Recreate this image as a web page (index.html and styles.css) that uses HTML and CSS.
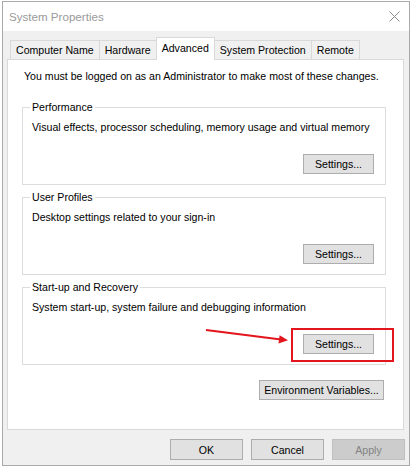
FILE: index.html
```html
<!DOCTYPE html>
<html>
<head>
<meta charset="utf-8">
<link rel="stylesheet" href="styles.css">
</head>
<body>
<div class="window">
  <div class="titlebar">
    <span class="title">System Properties</span>
    <svg class="close" width="11" height="11" viewBox="0 0 11 11"><path d="M0.5 0.5 L10.5 10.5 M10.5 0.5 L0.5 10.5" stroke="#8a8a8a" stroke-width="1" fill="none"/></svg>
  </div>
  <div class="body">
    <div class="tabs">
      <div class="tab">Computer Name</div>
      <div class="tab">Hardware</div>
      <div class="tab active">Advanced</div>
      <div class="tab">System Protection</div>
      <div class="tab">Remote</div>
    </div>
    <div class="panel">
      <p class="note">You must be logged on as an Administrator to make most of these changes.</p>
      <fieldset class="group first">
        <legend>Performance</legend>
        <p class="desc">Visual effects, processor scheduling, memory usage and virtual memory</p>
        <div class="actions"><button class="btn">Settings...</button></div>
      </fieldset>
      <fieldset class="group">
        <legend>User Profiles</legend>
        <p class="desc">Desktop settings related to your sign-in</p>
        <div class="actions"><button class="btn">Settings...</button></div>
      </fieldset>
      <fieldset class="group">
        <legend>Start-up and Recovery</legend>
        <p class="desc">System start-up, system failure and debugging information</p>
        <div class="actions">
          <div class="highlight">
            <svg class="arrow" width="92" height="20" viewBox="0 0 92 20"><line x1="3" y1="4" x2="78" y2="13.4" stroke="#e3141b" stroke-width="2"/><polygon points="85,14.3 76.6,9.2 75.5,17.6" fill="#e3141b"/></svg>
            <button class="btn">Settings...</button>
          </div>
        </div>
      </fieldset>
      <div class="env-row"><button class="btn wide">Environment Variables...</button></div>
    </div>
    <div class="footer">
      <button class="btn big">OK</button>
      <button class="btn big">Cancel</button>
      <button class="btn big disabled">Apply</button>
    </div>
  </div>
</div>
</body>
</html>
```
FILE: styles.css
```css
* { box-sizing: border-box; }
html, body { margin: 0; padding: 0; }
body {
  background: #ffffff;
  font-family: "Liberation Sans", Arial, sans-serif;
  font-size: 10.6px;
  color: #000;
}
.window {
  margin: 1px 0 0 2px;
  width: 408px;
  height: 465px;
  border: 1px solid #a9a9a9;
  background: #f0f0f0;
  display: flex;
  flex-direction: column;
}
.titlebar {
  height: 29px;
  background: #fff;
  display: flex;
  align-items: center;
  justify-content: space-between;
  padding: 0 9px 0 6px;
  flex: 0 0 auto;
}
.title {
  font-size: 11.6px;
  color: #9a9a9a;
}
.body {
  padding: 6px 5px 0 4px;
  display: flex;
  flex-direction: column;
}
.tabs {
  display: flex;
  align-items: flex-end;
  margin-left: 3px;
  height: 22px;
}
.tab {
  height: 19px;
  line-height: 18px;
  padding: 0 5px;
  border: 1px solid #d9d9d9;
  border-bottom: none;
  background: #f0f0f0;
  margin-left: -1px;
  white-space: nowrap;
}
.tab:first-child { margin-left: 0; }
.tab.active {
  height: 23px;
  line-height: 20px;
  background: #fff;
  position: relative;
  z-index: 1;
  margin-bottom: -1px;
}
.panel {
  height: 371px;
  background: #fff;
  border: 1px solid #d9d9d9;
  padding: 9px 17px 0 14px;
}
.note {
  margin: 0 0 0 2px;
  line-height: 15px;
}
.group {
  margin: 5px 0 0 0;
  padding: 5px 11px 10px 9px;
  border: 1px solid #dcdcdc;
  min-width: 0;
}
.group.first { margin-top: 16px; }
.group legend {
  padding: 0 2px;
  margin-left: -2px;
  line-height: 15px;
}
.desc {
  margin: 0;
  line-height: 15px;
}
.actions {
  display: flex;
  justify-content: flex-end;
  margin-top: 19px;
}
.btn {
  font-family: inherit;
  font-size: inherit;
  color: #000;
  width: 71px;
  height: 20px;
  padding: 0;
  border: 1px solid #adadad;
  background: #e1e1e1;
}
.highlight {
  position: relative;
  display: flex;
}
.highlight::before {
  content: "";
  position: absolute;
  left: -12px;
  top: -6px;
  width: 99px;
  height: 30px;
  border: 2px solid #e3141b;
}
.arrow {
  position: absolute;
  left: -100px;
  top: -8px;
}
.env-row {
  display: flex;
  justify-content: flex-end;
  padding-right: 2px;
  margin-top: 15px;
}
.btn.wide { width: 125px; }
.footer {
  display: flex;
  justify-content: flex-end;
  gap: 8px;
  margin-top: 9px;
  margin-right: -1px;
}
.btn.big { width: 73px; height: 21px; }
.btn.disabled {
  background: #cccccc;
  border-color: #bfbfbf;
  color: #838383;
}
```
